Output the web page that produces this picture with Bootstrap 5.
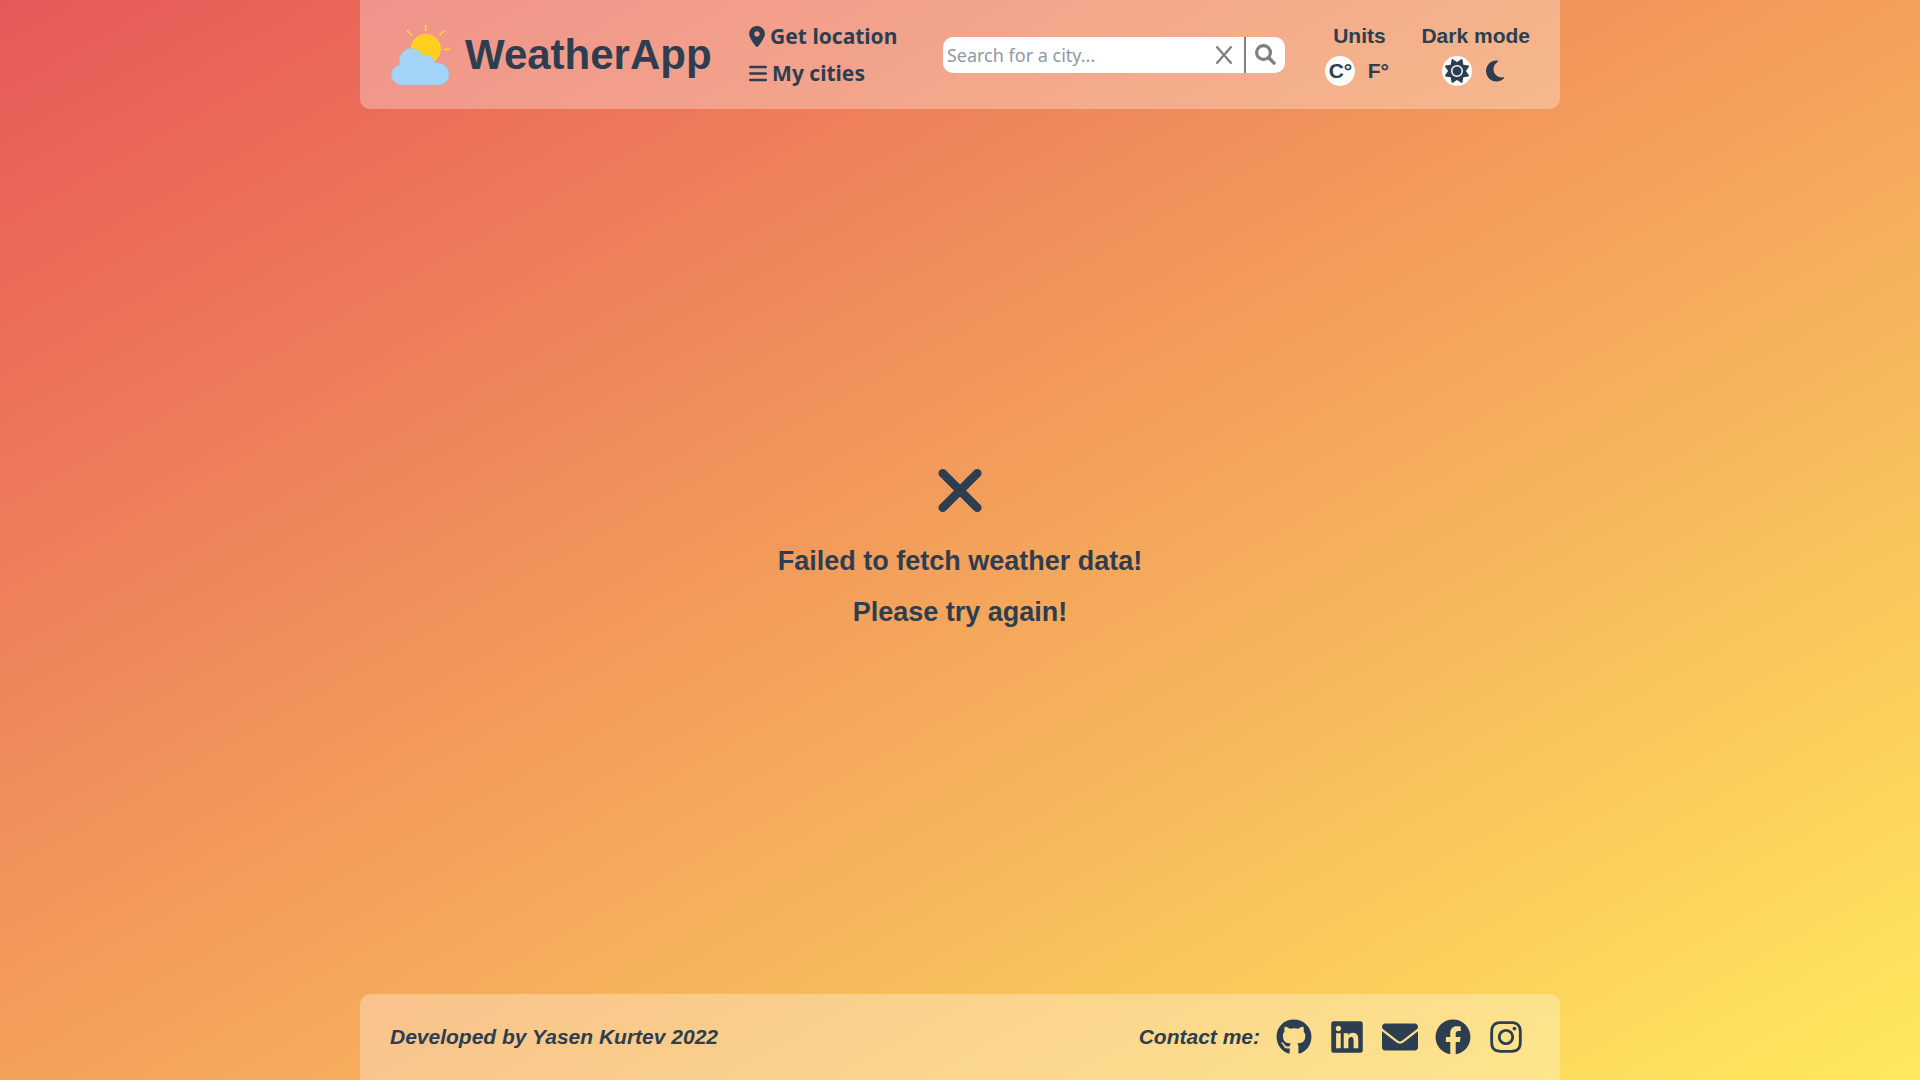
<!DOCTYPE html>
<html lang="en">
<head>
<meta charset="utf-8">
<meta name="viewport" content="width=device-width, initial-scale=1">
<title>WeatherApp</title>
<link rel="stylesheet" href="https://cdn.jsdelivr.net/npm/bootstrap@5.3.0/dist/css/bootstrap.min.css">
<style>
  :root { --ink: #2c3e50; }
  body {
    font-family: "Liberation Sans", Arial, sans-serif;
    font-weight: 700;
    font-size: 21px;
    line-height: 24px;
    color: var(--ink);
    background: linear-gradient(to bottom right, #e75758, #f3a05b, #ffe95c) no-repeat fixed;
  }
  .shell { max-width: 1200px; }
  .panel { background: rgba(255, 255, 255, .3); padding: 0 30px; }
  .top-panel { border-radius: 0 0 10px 10px; min-height: 109px; }
  .bottom-panel { border-radius: 10px 10px 0 0; min-height: 86px; }
  a, .plain-btn { color: inherit; text-decoration: none; }
  .plain-btn { background: none; border: 0; padding: 0; font-weight: inherit; }
  svg { display: block; fill: currentColor; flex: none; }
  .brand { font-size: 42px; line-height: 48px; gap: 15px; }
  .menu { font-family: "Noto Sans", Tahoma, sans-serif; gap: 13px; padding-right: 8px; }
  .menu .plain-btn { gap: 5px; }
  .search-box { width: 342px; height: 36px; border-radius: 10px; background: #fff; color: #808080; }
  .search-box input {
    border: 0; outline: 0; background: none; min-width: 0; padding: 0 4px; color: var(--ink);
    font: 400 18px/24px "Noto Sans", Tahoma, sans-serif;
  }
  .search-box input::placeholder { color: #8e99a4; opacity: 1; }
  .clear-btn { padding: 0 12px; }
  .go-btn { border-left: 2px solid #808080; padding: 0 9px; }
  .options { gap: 28px; padding-left: 3px; }
  .options h2 { font-size: 21px; line-height: 24px; font-weight: 700; margin: 0 0 8px; }
  .choice { width: 30px; height: 30px; border-radius: 50%; }
  .choice.picked { background: #fafcfc; }
  .notice { font-size: 27px; line-height: 31px; }
  .notice svg { margin: 0 0 21px; }
  .notice p { margin: 0 0 20px; }
  .bottom-panel { font-style: italic; }
  .social { gap: 17px; padding-right: 6px; }
</style>
</head>
<body>
<div class="shell container-fluid p-0 min-vh-100 d-flex flex-column">
  <header class="panel top-panel d-flex align-items-center justify-content-between">
    <a href="#" class="brand d-flex align-items-center">
      <svg width="60" height="60" viewBox="0 0 60 60" aria-hidden="true">
        <g stroke="#ffdb2e" stroke-width="1.6"><path d="M35.7 0v6M17 5.500l5 5M54.400 5.500l-5 5M54.200 24.400h5.600"/></g>
        <circle cx="35.8" cy="24" r="14.8" fill="#ffcf1f" stroke="#ffd84a" stroke-width=".6"/>
        <path fill="#a4d4f7" stroke="#8fcdf8" stroke-width=".5" d="M10.300 59.700a10 10 0 0 1-.5-19.800c-1.600-8.700 4-16.300 11.700-16.300 4.800 0 8.700 2.600 10.700 7 6-1.800 12.200 1.900 13 7.700 8-1.300 13.700 4.500 13.700 10.900 0 6-4.700 10.500-10.500 10.500z"/>
      </svg>
      <span>WeatherApp</span>
    </a>
    <nav class="menu d-flex flex-column align-items-start">
      <button type="button" class="plain-btn d-flex align-items-center">
        <svg width="16" height="21" viewBox="0 0 384 512" aria-hidden="true"><path d="M215.700 499.200C267 435 384 279.400 384 192C384 86 298 0 192 0S0 86 0 192c0 87.400 117 243 168.300 307.200c12.300 15.300 35.100 15.300 47.400 0zM192 128a64 64 0 1 1 0 128 64 64 0 1 1 0-128z"/></svg>Get location
      </button>
      <button type="button" class="plain-btn d-flex align-items-center">
        <svg width="18" height="21" viewBox="0 0 448 512" aria-hidden="true"><rect y="64" width="448" height="64" rx="32"/><rect y="224" width="448" height="64" rx="32"/><rect y="384" width="448" height="64" rx="32"/></svg>My cities
      </button>
    </nav>
    <form class="search-box d-flex overflow-hidden" role="search">
      <input class="flex-grow-1" type="text" placeholder="Search for a city..." aria-label="Search for a city">
      <button type="button" class="plain-btn clear-btn d-flex align-items-center" aria-label="Clear">
        <svg width="16" height="18" viewBox="0 0 16 18"><path d="M1.200 1.200l13.600 15.600M14.800 1.200L1.200 16.800" fill="none" stroke="currentColor" stroke-width="2.400" stroke-linecap="round"/></svg>
      </button>
      <button type="button" class="plain-btn go-btn d-flex align-items-center" aria-label="Search">
        <svg width="21" height="21" viewBox="0 0 21 21"><circle cx="8.500" cy="8.500" r="6.900" fill="none" stroke="currentColor" stroke-width="3.200"/><path d="M13.800 13.800l5.300 5.300" stroke="currentColor" stroke-width="3.400" stroke-linecap="round"/></svg>
      </button>
    </form>
    <div class="options d-flex">
      <section class="d-flex flex-column align-items-center">
        <h2>Units</h2>
        <div class="d-flex gap-2">
          <button type="button" class="plain-btn choice picked d-flex align-items-center justify-content-center" aria-pressed="true">C°</button>
          <button type="button" class="plain-btn choice d-flex align-items-center justify-content-center" aria-pressed="false">F°</button>
        </div>
      </section>
      <section class="d-flex flex-column align-items-center">
        <h2>Dark mode</h2>
        <div class="d-flex gap-2">
          <button type="button" class="plain-btn choice picked d-flex align-items-center justify-content-center" aria-label="Light" aria-pressed="true">
            <svg width="24" height="24" viewBox="0 0 512 512"><path d="M361.500 1.200c5 2.100 8.600 6.600 9.600 11.900L391 121l107.900 19.800c5.300 1 9.800 4.600 11.900 9.600s1.500 10.700-1.600 15.200L446.900 256l62.300 90.300c3.100 4.500 3.700 10.200 1.600 15.200s-6.600 8.600-11.900 9.600L391 391 371.100 498.900c-1 5.300-4.600 9.800-9.600 11.900s-10.700 1.500-15.200-1.600L256 446.900l-90.300 62.300c-4.500 3.100-10.200 3.700-15.200 1.600s-8.600-6.600-9.600-11.900L121 391 13.100 371.100c-5.300-1-9.800-4.600-11.900-9.600s-1.500-10.700 1.600-15.200L65.100 256 2.800 165.700c-3.100-4.500-3.700-10.200-1.600-15.200s6.600-8.600 11.900-9.600L121 121 140.900 13.100c1-5.300 4.600-9.800 9.600-11.900s10.700-1.500 15.200 1.600L256 65.100 346.300 2.800c4.500-3.100 10.200-3.700 15.200-1.600zM160 256a96 96 0 1 1 192 0 96 96 0 1 1-192 0zm224 0a128 128 0 1 0-256 0 128 128 0 1 0 256 0z"/></svg>
          </button>
          <button type="button" class="plain-btn choice d-flex align-items-center justify-content-center" aria-label="Dark" aria-pressed="false">
            <svg width="18" height="24" viewBox="0 0 384 512"><path d="M223.500 32C100 32 0 132.300 0 256S100 480 223.500 480c60.600 0 115.500-24.200 155.800-63.400c5-4.900 6.300-12.500 3.100-18.700s-10.100-9.700-17-8.500c-9.800 1.700-19.800 2.600-30.100 2.600c-96.900 0-175.500-78.800-175.500-176c0-65.800 36-123.100 89.300-153.300c6.100-3.500 9.200-10.500 7.700-17.300s-7.300-11.900-14.300-12.500c-6.300-.5-12.600-.8-19-.8z"/></svg>
          </button>
        </div>
      </section>
    </div>
  </header>

  <main class="notice flex-grow-1 d-flex flex-column align-items-center justify-content-center text-center">
    <svg width="44" height="69" viewBox="0 0 320 512" aria-hidden="true"><path d="M32 128l256 256M288 128L32 384" fill="none" stroke="currentColor" stroke-width="64" stroke-linecap="round"/></svg>
    <p>Failed to fetch weather data!</p>
    <p>Please try again!</p>
  </main>

  <footer class="panel bottom-panel d-flex align-items-center justify-content-between">
    <span>Developed by Yasen Kurtev 2022</span>
    <div class="d-flex align-items-center gap-3">
      <span>Contact me:</span>
      <div class="social d-flex">
        <a href="#" aria-label="GitHub"><svg width="36" height="36" viewBox="-8 0 512 512"><path d="M165.900 397.400c0 2-2.300 3.600-5.200 3.600-3.300.3-5.600-1.300-5.600-3.600 0-2 2.300-3.600 5.200-3.600 3-.3 5.600 1.300 5.600 3.600zm-31.100-4.500c-.7 2 1.300 4.300 4.300 4.900 2.600 1 5.600 0 6.200-2s-1.300-4.300-4.300-5.200c-2.600-.7-5.500.3-6.200 2.300zm44.200-1.700c-2.900.7-4.900 2.600-4.600 4.900.3 2 2.900 3.300 5.900 2.600 2.900-.7 4.900-2.600 4.600-4.600-.3-1.900-3-3.200-5.900-2.900zM244.800 8C106.100 8 0 113.300 0 252c0 110.900 69.800 205.800 169.500 239.200 12.800 2.300 17.300-5.600 17.300-12.100 0-6.200-.3-40.400-.3-61.400 0 0-70 15-84.700-29.800 0 0-11.400-29.100-27.800-36.600 0 0-22.900-15.700 1.600-15.400 0 0 24.900 2 38.600 25.800 21.900 38.600 58.600 27.500 72.900 20.900 2.300-16 8.800-27.100 16-33.700-55.900-6.200-112.300-14.300-112.300-110.500 0-27.500 7.600-41.300 23.600-58.900-2.600-6.500-11.100-33.300 2.600-67.900 20.900-6.500 69 27 69 27 20-5.600 41.500-8.500 62.800-8.500s42.800 2.900 62.800 8.500c0 0 48.100-33.600 69-27 13.700 34.700 5.200 61.400 2.600 67.900 16 17.700 25.800 31.500 25.800 58.900 0 96.500-58.900 104.200-114.800 110.500 9.200 7.900 17 22.900 17 46.400 0 33.700-.3 75.400-.3 83.600 0 6.500 4.600 14.400 17.300 12.100C428.200 457.800 496 362.900 496 252 496 113.300 383.500 8 244.800 8zM97.200 352.900c-1.300 1-1 3.300.7 5.200 1.600 1.600 3.900 2.300 5.200 1 1.300-1 1-3.300-.7-5.200-1.600-1.600-3.900-2.300-5.200-1zm-10.800-8.100c-.7 1.300.3 2.900 2.300 3.900 1.600 1 3.600.7 4.300-.7.7-1.300-.3-2.900-2.300-3.900-2-.6-3.600-.3-4.300.7zm32.400 35.600c-1.600 1.300-1 4.300 1.300 6.200 2.300 2.300 5.200 2.600 6.500 1 1.300-1.300.7-4.300-1.300-6.200-2.200-2.300-5.200-2.600-6.500-1zm-11.400-14.700c-1.600 1-1.600 3.600 0 5.900 1.600 2.300 4.300 3.300 5.600 2.300 1.600-1.300 1.600-3.900 0-6.200-1.400-2.300-4-3.300-5.600-2z"/></svg></a>
        <a href="#" aria-label="LinkedIn"><svg width="36" height="36" viewBox="-32 0 512 512"><path d="M416 32H31.900C14.300 32 0 46.500 0 64.300v383.400C0 465.500 14.300 480 31.900 480H416c17.600 0 32-14.500 32-32.300V64.300c0-17.800-14.400-32.300-32-32.300zM135.400 416H69V202.200h66.500V416zm-33.200-243c-21.300 0-38.500-17.300-38.500-38.500S80.900 96 102.200 96c21.200 0 38.500 17.300 38.500 38.500 0 21.300-17.200 38.500-38.500 38.500zm282.100 243h-66.400V312c0-24.800-.5-56.700-34.500-56.700-34.600 0-39.900 27-39.900 54.900V416h-66.400V202.200h63.700v29.200h.9c8.900-16.800 30.600-34.500 62.900-34.500 67.200 0 79.700 44.300 79.700 101.900V416z"/></svg></a>
        <a href="#" aria-label="Email"><svg width="36" height="36" viewBox="0 0 512 512"><path d="M256 352c-16.530 0-33.060-5.422-47.160-16.410L0 173.200V400C0 426.500 21.490 448 48 448h416c26.510 0 48-21.490 48-48V173.200l-208.800 162.500C289.100 346.600 272.500 352 256 352zM16.290 145.300l212.200 165.100c16.190 12.600 38.870 12.600 55.060 0l212.200-165.100C505.100 137.300 512 125 512 112C512 85.490 490.500 64 464 64h-416C21.490 64 0 85.490 0 112C0 125 6.010 137.300 16.290 145.300z"/></svg></a>
        <a href="#" aria-label="Facebook"><svg width="36" height="36" viewBox="0 0 512 512"><path d="M504 256C504 119 393 8 256 8S8 119 8 256c0 123.780 90.690 226.380 209.250 245V327.690h-63V256h63v-54.640c0-62.150 37-96.480 93.670-96.480 27.140 0 55.520 4.840 55.520 4.840v61h-31.280c-30.800 0-40.410 19.120-40.410 38.730V256h68.780l-11 71.690h-57.780V501C413.310 482.380 504 379.780 504 256z"/></svg></a>
        <a href="#" aria-label="Instagram"><svg width="36" height="36" viewBox="-32 0 512 512"><path d="M224.100 141c-63.600 0-114.900 51.300-114.900 114.900s51.300 114.900 114.900 114.900S339 319.500 339 255.900 287.700 141 224.100 141zm0 189.600c-41.100 0-74.700-33.500-74.700-74.700s33.500-74.700 74.700-74.700 74.700 33.500 74.700 74.700-33.600 74.700-74.700 74.700zm146.400-194.300c0 14.900-12 26.800-26.800 26.800-14.900 0-26.800-12-26.800-26.800s12-26.800 26.800-26.800 26.800 12 26.800 26.800zm76.100 27.200c-1.700-35.900-9.900-67.700-36.200-93.900-26.200-26.200-58-34.400-93.900-36.200-37-2.100-147.900-2.100-184.900 0-35.800 1.700-67.600 9.900-93.900 36.100s-34.400 58-36.200 93.900c-2.100 37-2.100 147.900 0 184.900 1.700 35.900 9.900 67.700 36.200 93.900s58 34.400 93.900 36.200c37 2.100 147.900 2.100 184.900 0 35.900-1.700 67.700-9.900 93.900-36.200 26.200-26.200 34.400-58 36.200-93.900 2.100-37 2.100-147.800 0-184.800zM398.800 388c-7.800 19.600-22.900 34.700-42.600 42.600-29.500 11.700-99.500 9-132.100 9s-102.700 2.600-132.100-9c-19.600-7.800-34.700-22.900-42.600-42.600-11.700-29.500-9-99.500-9-132.100s-2.600-102.700 9-132.100c7.800-19.600 22.900-34.700 42.600-42.600 29.500-11.700 99.500-9 132.100-9s102.700-2.600 132.100 9c19.600 7.800 34.700 22.900 42.600 42.600 11.700 29.500 9 99.500 9 132.100s2.700 102.700-9 132.100z"/></svg></a>
      </div>
    </div>
  </footer>
</div>
<script src="https://cdn.jsdelivr.net/npm/bootstrap@5.3.0/dist/js/bootstrap.bundle.min.js"></script>
</body>
</html>
